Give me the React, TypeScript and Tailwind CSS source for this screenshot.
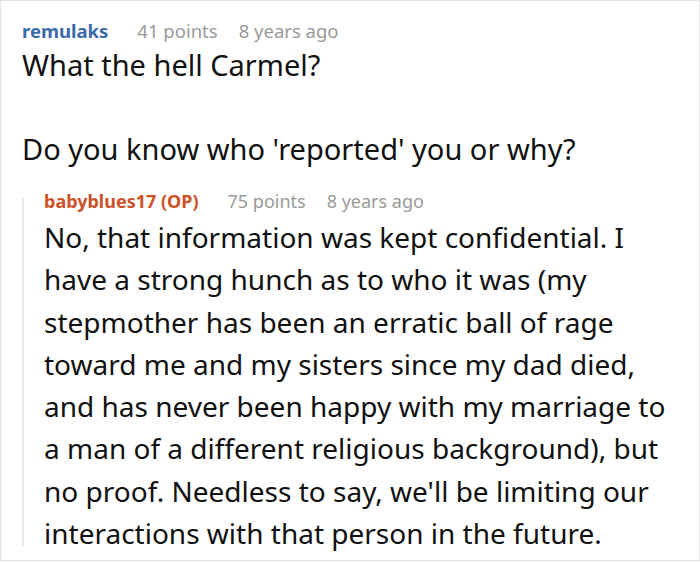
import React from 'react';

const font = { fontFamily: '"Noto Sans", "Open Sans", sans-serif' };

const Meta: React.FC<{ author: string; color: string; points: string; age: string; size: string }> = ({ author, color, points, age, size }) => (
  <div className={`flex items-center leading-[24px] ${size}`}>
    <span className={`font-bold ${color}`}>{author}</span>
    <span className="ml-[29px] text-[#9a9a9a]">{points}</span>
    <span className="ml-[21px] text-[#9a9a9a]">{age}</span>
  </div>
);

const replyLines = [
  'No, that information was kept confidential. I',
  'have a strong hunch as to who it was (my',
  'stepmother has been an erratic ball of rage',
  'toward me and my sisters since my dad died,',
  'and has never been happy with my marriage to',
  'a man of a different religious background), but',
  "no proof. Needless to say, we'll be limiting our",
  'interactions with that person in the future.',
];

export default function App() {
  return (
    <div className="w-[700px] h-[561px] border border-[#e4e4e4] bg-white overflow-hidden" style={font}>
      <div className="pl-[21px] pt-[18px]">
        <Meta author="remulaks" color="text-[#3b6aab]" points="41 points" age="8 years ago" size="text-[18.5px]" />
        <div className="text-[29px] leading-[42px] text-[#111111] mt-[1px]">
          <p>What the hell Carmel?</p>
          <p className="mt-[42px]">Do you know who 'reported' you or why?</p>
        </div>
        <div className="mt-[19px] flex">
          <div className="w-[2px] bg-[#e8e8e8] mt-[9px] mb-[8px] shrink-0" />
          <div className="pl-[20px] w-[660px]">
            <Meta author="babyblues17 (OP)" color="text-[#cc5228]" points="75 points" age="8 years ago" size="text-[18px]" />
            <p className="text-[28px] leading-[42.3px] text-[#111111] mt-[3px] whitespace-nowrap">
              {replyLines.map((line, i) => (
                <React.Fragment key={i}>
                  {line}
                  {i < replyLines.length - 1 && <br />}
                </React.Fragment>
              ))}
            </p>
          </div>
        </div>
      </div>
    </div>
  );
}
